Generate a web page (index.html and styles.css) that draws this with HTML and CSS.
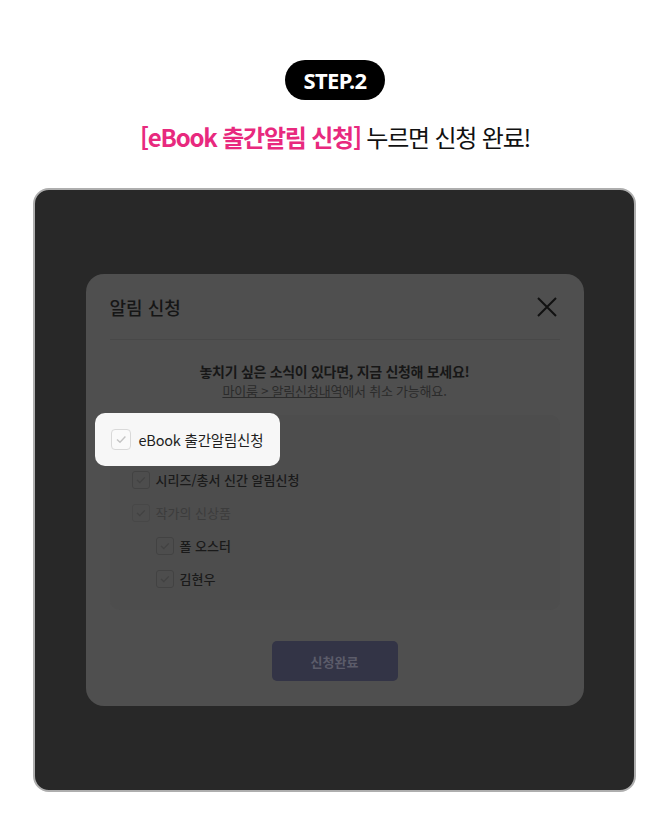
FILE: index.html
```html
<!DOCTYPE html>
<html lang="ko">
<head>
    <meta charset="UTF-8">
    <meta name="viewport" content="width=device-width, initial-scale=1.0">
    <title>STEP.2 eBook 출간알림 신청</title>
    <link rel="stylesheet" href="styles.css">
</head>
<body>
    <div id="principal">
        <header class="intro">
            <span class="step">STEP.2</span>
            <h2 class="headline"><em>[eBook 출간알림 신청]</em> 누르면 신청 완료!</h2>
        </header>

        <section class="frame">
            <div class="modal">
                <div class="modal-header">
                    <h3>알림 신청</h3>
                    <svg class="close" width="22" height="22" viewBox="0 0 22 22">
                        <path d="M2 2 L20 20 M20 2 L2 20" stroke="#111" stroke-width="2" fill="none"/>
                    </svg>
                </div>

                <div class="notice">
                    <p class="notice-main">놓치기 싶은 소식이 있다면, 지금 신청해 보세요!</p>
                    <p class="notice-sub"><u>마이룸 &gt; 알림신청내역</u>에서 취소 가능해요.</p>
                </div>

                <ul class="checklist">
                    <!-- 첫 줄은 강조 박스 아래에 가려짐 -->
                    <li class="item hidden"><span class="box"></span>eBook 출간알림신청</li>
                    <li class="item"><span class="box"></span>시리즈/총서 신간 알림신청</li>
                    <li class="item off"><span class="box"></span>작가의 신상품</li>
                    <li class="item sub"><span class="box"></span>폴 오스터</li>
                    <li class="item sub"><span class="box"></span>김현우</li>
                </ul>

                <div class="modal-footer">
                    <button class="btn-done">신청완료</button>
                </div>

                <!-- 강조 표시 -->
                <div class="callout">
                    <span class="box"></span>eBook 출간알림신청
                </div>
            </div>
        </section>
    </div>
</body>
</html>
```

FILE: styles.css
```css
body{
    margin: 0;
    background: #fff;
    font-family: "Noto Sans CJK KR", "Noto Sans", sans-serif;
    color: #111;
}

#principal{
    width: 670px;
    padding-bottom: 30px;
}

.intro{
    padding-top: 60px;
    text-align: center;
}

.step{
    display: inline-block;
    height: 40px;
    line-height: 40px;
    padding: 0 18px;
    border-radius: 20px;
    background: #000;
    color: #fff;
    font-family: "Noto Sans", sans-serif;
    font-weight: 700;
    font-size: 22px;
    letter-spacing: -0.6px;
}

.headline{
    margin: 20px 0 0;
    font-size: 24px;
    font-weight: 400;
    letter-spacing: -1.2px;
    line-height: 34px;
    color: #111;
}
.headline em{
    font-style: normal;
    font-weight: 700;
    color: #e8297e;
}

.frame{
    box-sizing: border-box;
    width: 603px;
    height: 604px;
    margin: 34px 0 0 33px;
    border: 2px solid #aeaeae;
    border-radius: 16px;
    background: #282828;
    display: flex;
    align-items: center;
    justify-content: center;
}

.modal{
    position: relative;
    box-sizing: border-box;
    width: 498px;
    height: 432px;
    padding: 0 24px;
    border-radius: 18px;
    background: #4f4f4f;
    display: flex;
    flex-direction: column;
}

.modal-header{
    height: 66px;
    border-bottom: 1px solid #484848;
    display: flex;
    align-items: center;
    justify-content: space-between;
    box-sizing: border-box;
}
.modal-header h3{
    margin: 0;
    font-size: 18px;
    font-weight: 500;
    color: #161616;
}
.close{
    margin-right: 2px;
}

.notice{
    margin-top: 21px;
    text-align: center;
}
.notice p{
    margin: 0;
    line-height: 20px;
}
.notice-main{
    font-size: 14px;
    font-weight: 700;
    color: #171717;
    letter-spacing: -0.3px;
}
.notice-sub{
    font-size: 13px;
    color: #2b2b2b;
    letter-spacing: -0.2px;
}

.checklist{
    list-style: none;
    margin: 14px 0 0;
    padding: 15px 22px;
    height: 195px;
    box-sizing: border-box;
    border-radius: 10px;
    background: #4d4d4d;
}

.item{
    height: 33px;
    display: flex;
    align-items: center;
    font-size: 13px;
    font-weight: 500;
    color: #1a1a1a;
}
.item.hidden{
    visibility: hidden;
}
.item.off{
    color: #3c3c3c;
    font-weight: 400;
}
.item.sub{
    padding-left: 24px;
}

.box{
    width: 18px;
    height: 18px;
    box-sizing: border-box;
    margin-right: 6px;
    border: 1px solid #424242;
    border-radius: 3px;
    background: transparent url("data:image/svg+xml,%3Csvg xmlns='http://www.w3.org/2000/svg' width='18' height='18'%3E%3Cpath d='M5 9 L7.8 11.6 L12.8 6.4' stroke='%23424242' stroke-width='1.3' fill='none'/%3E%3C/svg%3E") center no-repeat;
}
.item.off .box{
    border-color: #474747;
}

.modal-footer{
    margin-top: 31px;
    text-align: center;
}
.btn-done{
    width: 126px;
    height: 40px;
    border: 0;
    border-radius: 5px;
    background: #333446;
    color: #5c5c6a;
    font-family: "Noto Sans CJK KR", sans-serif;
    font-size: 13px;
    font-weight: 700;
}

.callout{
    position: absolute;
    left: 9px;
    top: 139px;
    width: 185px;
    height: 53px;
    box-sizing: border-box;
    padding-left: 16px;
    border-radius: 10px;
    background: #f7f7f7;
    display: flex;
    align-items: center;
    font-size: 14.5px;
    color: #1e1e1e;
    letter-spacing: -0.2px;
}
.callout .box{
    width: 20px;
    height: 21px;
    margin-right: 8px;
    border: 1px solid #d9d9d9;
    border-radius: 4px;
    background: #fafafa url("data:image/svg+xml,%3Csvg xmlns='http://www.w3.org/2000/svg' width='20' height='21'%3E%3Cpath d='M6 10.5 L9 13.3 L14.4 7.6' stroke='%23c4c4c4' stroke-width='1.4' fill='none'/%3E%3C/svg%3E") center no-repeat;
}
```
